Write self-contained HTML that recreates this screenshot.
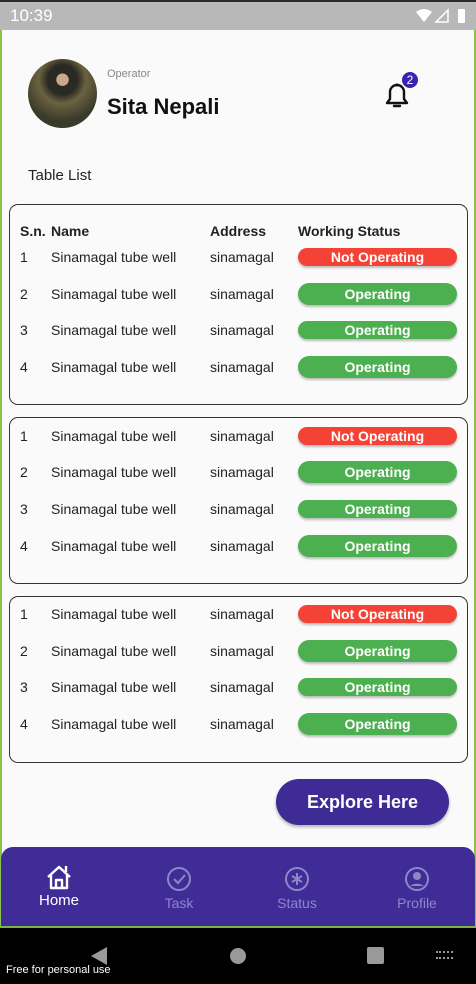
<!DOCTYPE html>
<html><head><meta charset="utf-8"><style>
*{margin:0;padding:0;box-sizing:border-box}
body{width:476px;height:984px;position:relative;overflow:hidden;background:#fafafa;font-family:"Liberation Sans",Roboto,sans-serif;color:#222}
.a{position:absolute}
.card{position:absolute;left:9px;width:459px;border:1.3px solid #333;border-radius:9px}
.t{position:absolute;font-size:14px;color:#222;white-space:nowrap}
.pill{position:absolute;left:298px;width:159px;border-radius:10px;color:#fff;font-weight:bold;font-size:14px;text-align:center;box-shadow:0 2px 2px rgba(0,0,0,.25)}
.r{background:#f44336}.g{background:#4caf50}
.nav{position:absolute;text-align:center;font-size:14px;color:#8f86c9;width:90px}
</style></head><body>
<div class="a" style="left:0;top:0;width:476px;height:30px;background:#b8b8b8;border-top:2px solid #2a2a2a"></div>
<div class="a" style="left:10px;top:6px;color:#fff;font-size:17px">10:39</div>
<svg class="a" style="left:416px;top:8px" width="56" height="16" viewBox="0 0 56 16"><path d="M0 4Q8-2 16 4L8 14Z" fill="#fff"/><path d="M20 14L32 2V14Z" fill="none" stroke="#fff" stroke-width="1.5"/><rect x="42" y="1" width="7" height="14" rx="1" fill="#fff"/></svg>
<div class="a" style="left:0;top:30px;width:2px;height:898px;background:#8bc34a"></div>
<div class="a" style="left:474px;top:30px;width:2px;height:898px;background:#8bc34a"></div>
<div class="a" style="left:28px;top:59px;width:69px;height:69px;border-radius:50%;background:radial-gradient(circle at 50% 30%,#caa890 0 10%,#2a2a22 11% 25%,#6b6240 40%,#3a3a2a 70%)"></div>
<div class="a" style="left:107px;top:68px;font-size:11px;color:#888">Operator</div>
<div class="a" style="left:107px;top:94px;font-size:22px;font-weight:bold;color:#111">Sita Nepali</div>
<svg class="a" style="left:383px;top:80px" width="28" height="30" viewBox="0 0 28 30"><path d="M4 23h20l-3-4v-7a7 7 0 0 0-14 0v7z" fill="none" stroke="#111" stroke-width="2.4" stroke-linejoin="round"/><path d="M11 26h6" stroke="#111" stroke-width="2.4" stroke-linecap="round"/><circle cx="14" cy="5" r="1.5" fill="#111"/></svg>
<div class="a" style="left:402px;top:72px;width:16px;height:16px;border-radius:50%;background:#3a23b0;color:#fff;font-size:12px;text-align:center;line-height:16px">2</div>
<div class="a" style="left:28px;top:167px;font-size:15px;color:#222">Table List</div>

<div class="card" style="top:204px;height:201px"></div>
<div class="t" style="left:20px;top:223px;font-weight:bold">S.n.</div>
<div class="t" style="left:51px;top:223px;font-weight:bold">Name</div>
<div class="t" style="left:210px;top:223px;font-weight:bold">Address</div>
<div class="t" style="left:298px;top:223px;font-weight:bold">Working Status</div>

<div class="card" style="top:417px;height:167px"></div>
<div class="card" style="top:596px;height:167px"></div>

<div id="rows"></div>
<script>
var cards=[[204,[53,90,126,163]],[417,[19,55,92,129]],[596,[18,55,91,128]]];
var h='';
cards.forEach(function(c){c[1].forEach(function(o,i){var y=c[0]+o;
h+='<div class="t" style="left:20px;top:'+(y-8)+'px">'+(i+1)+'</div>';
h+='<div class="t" style="left:51px;top:'+(y-8)+'px">Sinamagal tube well</div>';
h+='<div class="t" style="left:210px;top:'+(y-8)+'px">sinamagal</div>';
var ht=(i%2==0)?18:22;
h+='<div class="pill '+(i==0?'r':'g')+'" style="top:'+(y-ht/2)+'px;height:'+ht+'px;line-height:'+ht+'px;border-radius:'+ht/2+'px">'+(i==0?'Not Operating':'Operating')+'</div>';
});});
document.getElementById('rows').innerHTML=h;
</script>

<div class="a" style="left:276px;top:779px;width:173px;height:46px;border-radius:23px;background:#3f2b96;color:#fff;font-size:18px;font-weight:bold;text-align:center;line-height:46px;box-shadow:0 2px 3px rgba(0,0,0,.3)">Explore Here</div>

<div class="a" style="left:1px;top:847px;width:474px;height:81px;background:#3f2c96;border-radius:12px 12px 0 0"></div>
<div class="a" style="left:0;top:926px;width:476px;height:2px;background:#7cb342"></div>
<svg class="a" style="left:45px;top:864px" width="28" height="26" viewBox="0 0 28 26"><path d="M3 13L14 3l11 10M6 11v13h16V11M11 24v-8h6v8M21 8V2" fill="none" stroke="#fff" stroke-width="2.4" stroke-linejoin="round"/></svg>
<div class="nav" style="left:14px;top:892px;color:#fff;font-size:15px">Home</div>
<svg class="a" style="left:166px;top:866px" width="26" height="26"><circle cx="13" cy="13" r="11" fill="none" stroke="#8f86c9" stroke-width="2"/><path d="M8 13l4 4 7-8" fill="none" stroke="#8f86c9" stroke-width="2"/></svg>
<div class="nav" style="left:134px;top:895px">Task</div>
<svg class="a" style="left:284px;top:866px" width="26" height="26"><circle cx="13" cy="13" r="11" fill="none" stroke="#8f86c9" stroke-width="2"/><path d="M13 7v12M8 10l10 6M18 10l-10 6" stroke="#8f86c9" stroke-width="2"/></svg>
<div class="nav" style="left:252px;top:895px">Status</div>
<svg class="a" style="left:404px;top:866px" width="26" height="26"><circle cx="13" cy="13" r="11" fill="none" stroke="#8f86c9" stroke-width="2"/><circle cx="13" cy="10" r="4" fill="#8f86c9"/><path d="M6 20a9 6 0 0 1 14 0" fill="#8f86c9"/></svg>
<div class="nav" style="left:372px;top:895px">Profile</div>

<div class="a" style="left:0;top:928px;width:476px;height:56px;background:#000"></div>
<svg class="a" style="left:90px;top:946px" width="18" height="20"><path d="M17 1V19L1 10Z" fill="#999"/></svg>
<div class="a" style="left:230px;top:948px;width:16px;height:16px;border-radius:50%;background:#999"></div>
<div class="a" style="left:367px;top:947px;width:17px;height:17px;border-radius:2px;background:#999"></div>
<div class="a" style="left:436px;top:951px;width:17px;height:8px;border-top:2px dotted #999;border-bottom:2px dotted #999"></div>
<div class="a" style="left:6px;top:964px;color:#fff;font-size:11px">Free for personal use</div>
</body></html>
